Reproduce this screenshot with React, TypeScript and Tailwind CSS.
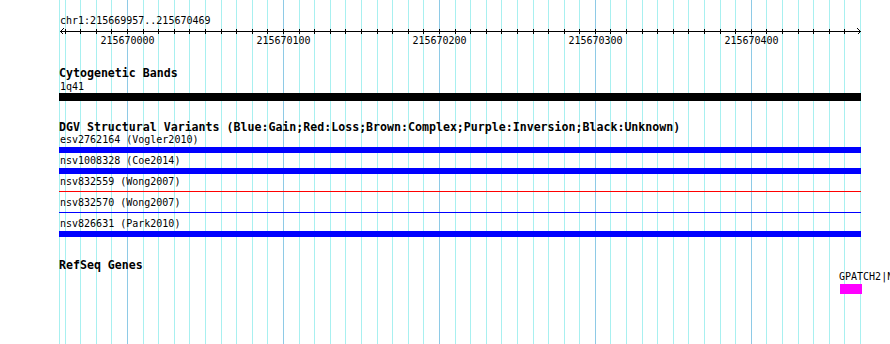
import React from "react";

const START = 215669957;
const END = 215670469;

// genome coordinate -> pixel column (800px panel starting at x=60)
const toX = (bp: number) => Math.round(60 + ((bp - START) * 800) / (END - START + 1));

const ticks: number[] = [];
for (let bp = 215669960; bp <= 215670460; bp += 10) ticks.push(bp);

interface Variant {
  name: string;
  kind: "bar" | "line";
  color: string;
}

const variants: Variant[] = [
  { name: "esv2762164 (Vogler2010)", kind: "bar", color: "bg-[#0000ff]" },
  { name: "nsv1008328 (Coe2014)", kind: "bar", color: "bg-[#0000ff]" },
  { name: "nsv832559 (Wong2007)", kind: "line", color: "bg-[#ff0000]" },
  { name: "nsv832570 (Wong2007)", kind: "line", color: "bg-[#0000ff]" },
  { name: "nsv826631 (Park2010)", kind: "bar", color: "bg-[#0000ff]" },
];

function GridLines() {
  return (
    <svg className="absolute inset-0" width={890} height={344} shapeRendering="crispEdges">
      <rect x={59} y={0} width={1} height={344} fill="#a8f0f0" />
      <rect x={860} y={0} width={1} height={344} fill="#a8f0f0" />
      {ticks.map((bp) => (
        <rect
          key={bp}
          x={toX(bp)}
          y={0}
          width={1}
          height={344}
          fill={bp % 100 === 0 ? "#8ecae6" : "#a8f0f0"}
        />
      ))}
    </svg>
  );
}

function Ruler() {
  return (
    <svg width={890} height={20} shapeRendering="crispEdges" className="block">
      <rect x={60} y={4} width={801} height={1} fill="#000" />
      <polyline points="63.5,1.5 60.5,4.5 63.5,7.5" fill="none" stroke="#000" strokeWidth={1} />
      <polyline points="857.5,1.5 860.5,4.5 857.5,7.5" fill="none" stroke="#000" strokeWidth={1} />
      {ticks.map((bp) => (
        <rect key={bp} x={toX(bp)} y={2} width={1} height={5} fill="#000" />
      ))}
      {ticks
        .filter((bp) => bp % 100 === 0)
        .map((bp) => (
          <text
            key={bp}
            x={toX(bp) + 0.5}
            y={17}
            textAnchor="middle"
            fontFamily="'DejaVu Sans Mono', monospace"
            fontSize={10}
            fill="#000"
          >
            {bp}
          </text>
        ))}
    </svg>
  );
}

function TrackTitle({ children }: { children: React.ReactNode }) {
  return (
    <div className="h-[13px] whitespace-nowrap pl-[59px] text-[11.6px] font-bold leading-[13px]">{children}</div>
  );
}

export default function App() {
  return (
    <div className="relative h-[344px] w-[890px] overflow-hidden bg-white font-['DejaVu_Sans_Mono',monospace] text-black">
      <GridLines />
      <div className="relative flex flex-col">
        <div className="mt-[14px] h-[13px] pl-[60px] text-[10px] leading-[13px]">
          chr1:{START}..{END}
        </div>
        <Ruler />

        <div className="mt-[20px]">
          <TrackTitle>Cytogenetic Bands</TrackTitle>
        </div>
        <div className="h-[13px] pl-[60px] text-[10px] leading-[13px]">1q41</div>
        <div className="ml-[59px] h-[8px] w-[802px] bg-black" />

        <div className="mt-[20px]">
          <TrackTitle>DGV Structural Variants (Blue:Gain;Red:Loss;Brown:Complex;Purple:Inversion;Black:Unknown)</TrackTitle>
        </div>
        {variants.map((v) => (
          <div key={v.name} className="flex h-[21px] flex-col">
            <div className="h-[12px] whitespace-nowrap pl-[60px] text-[10px] leading-[12px]">{v.name}</div>
            <div className="ml-[59px] mt-px h-[6px] w-[802px]">
              {v.kind === "bar" ? (
                <div className={`h-[6px] w-full ${v.color}`} />
              ) : (
                <div className={`mt-[2px] h-px w-full ${v.color}`} />
              )}
            </div>
          </div>
        ))}

        <div className="mt-[20px]">
          <TrackTitle>RefSeq Genes</TrackTitle>
        </div>
        <div className="-mt-[2px] h-[13px] whitespace-nowrap pl-[839px] text-[10px] leading-[13px]">
          GPATCH2|NM_018040
        </div>
        <div className="ml-[840px] mt-px h-[10px] w-[22px] bg-[#ff00ff]" />
      </div>
    </div>
  );
}
